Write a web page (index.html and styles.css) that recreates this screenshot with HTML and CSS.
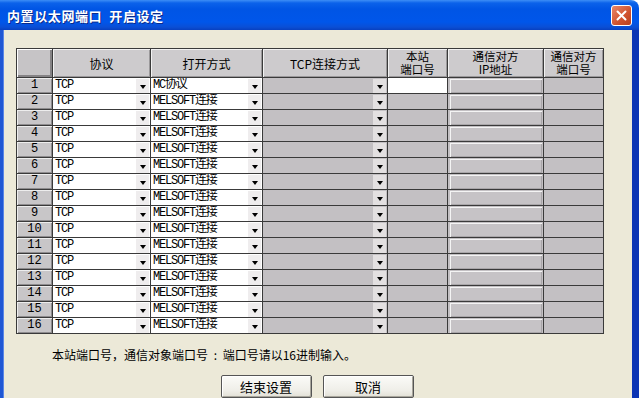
FILE: index.html
```html
<!DOCTYPE html>
<html lang="zh-CN">
<head>
  <meta charset="UTF-8">
  <title>内置以太网端口 开启设定</title>
  <link rel="stylesheet" href="styles.css">
</head>
<body>
  <div class="window">
    <!-- 标题栏 -->
    <div class="titlebar">
      <span class="title">内置以太网端口&nbsp;&nbsp;开启设定</span>
      <span class="close"><svg width="11" height="11" viewBox="0 0 11 11"><path d="M1.5 1.5 L9.5 9.5 M9.5 1.5 L1.5 9.5" stroke="#fff" stroke-width="2" stroke-linecap="round"/></svg></span>
    </div>

    <div class="client">
      <table class="ports">
        <colgroup>
          <col style="width:36px"><col style="width:98px"><col style="width:112px"><col style="width:125px"><col style="width:60px"><col style="width:96px"><col style="width:60px">
        </colgroup>
        <thead>
          <tr>
            <th class="corner"></th>
            <th>协议</th>
            <th>打开方式</th>
            <th>TCP连接方式</th>
            <th class="two"><span>本站</span><span>端口号</span></th>
            <th class="two"><span>通信对方</span><span>IP地址</span></th>
            <th class="two"><span>通信对方</span><span>端口号</span></th>
          </tr>
        </thead>
        <tbody>
          <tr><th class="num">1</th><td class="combo"><div><span>TCP</span><i></i></div></td><td class="combo"><div><span>MC协议</span><i></i></div></td><td class="combo off"><div><span></span><i></i></div></td><td class="port"></td><td class="ip"><div></div></td><td class="off"></td></tr>
          <tr><th class="num">2</th><td class="combo"><div><span>TCP</span><i></i></div></td><td class="combo"><div><span>MELSOFT连接</span><i></i></div></td><td class="combo off"><div><span></span><i></i></div></td><td class="off"></td><td class="ip"><div></div></td><td class="off"></td></tr>
          <tr><th class="num">3</th><td class="combo"><div><span>TCP</span><i></i></div></td><td class="combo"><div><span>MELSOFT连接</span><i></i></div></td><td class="combo off"><div><span></span><i></i></div></td><td class="off"></td><td class="ip"><div></div></td><td class="off"></td></tr>
          <tr><th class="num">4</th><td class="combo"><div><span>TCP</span><i></i></div></td><td class="combo"><div><span>MELSOFT连接</span><i></i></div></td><td class="combo off"><div><span></span><i></i></div></td><td class="off"></td><td class="ip"><div></div></td><td class="off"></td></tr>
          <tr><th class="num">5</th><td class="combo"><div><span>TCP</span><i></i></div></td><td class="combo"><div><span>MELSOFT连接</span><i></i></div></td><td class="combo off"><div><span></span><i></i></div></td><td class="off"></td><td class="ip"><div></div></td><td class="off"></td></tr>
          <tr><th class="num">6</th><td class="combo"><div><span>TCP</span><i></i></div></td><td class="combo"><div><span>MELSOFT连接</span><i></i></div></td><td class="combo off"><div><span></span><i></i></div></td><td class="off"></td><td class="ip"><div></div></td><td class="off"></td></tr>
          <tr><th class="num">7</th><td class="combo"><div><span>TCP</span><i></i></div></td><td class="combo"><div><span>MELSOFT连接</span><i></i></div></td><td class="combo off"><div><span></span><i></i></div></td><td class="off"></td><td class="ip"><div></div></td><td class="off"></td></tr>
          <tr><th class="num">8</th><td class="combo"><div><span>TCP</span><i></i></div></td><td class="combo"><div><span>MELSOFT连接</span><i></i></div></td><td class="combo off"><div><span></span><i></i></div></td><td class="off"></td><td class="ip"><div></div></td><td class="off"></td></tr>
          <tr><th class="num">9</th><td class="combo"><div><span>TCP</span><i></i></div></td><td class="combo"><div><span>MELSOFT连接</span><i></i></div></td><td class="combo off"><div><span></span><i></i></div></td><td class="off"></td><td class="ip"><div></div></td><td class="off"></td></tr>
          <tr><th class="num">10</th><td class="combo"><div><span>TCP</span><i></i></div></td><td class="combo"><div><span>MELSOFT连接</span><i></i></div></td><td class="combo off"><div><span></span><i></i></div></td><td class="off"></td><td class="ip"><div></div></td><td class="off"></td></tr>
          <tr><th class="num">11</th><td class="combo"><div><span>TCP</span><i></i></div></td><td class="combo"><div><span>MELSOFT连接</span><i></i></div></td><td class="combo off"><div><span></span><i></i></div></td><td class="off"></td><td class="ip"><div></div></td><td class="off"></td></tr>
          <tr><th class="num">12</th><td class="combo"><div><span>TCP</span><i></i></div></td><td class="combo"><div><span>MELSOFT连接</span><i></i></div></td><td class="combo off"><div><span></span><i></i></div></td><td class="off"></td><td class="ip"><div></div></td><td class="off"></td></tr>
          <tr><th class="num">13</th><td class="combo"><div><span>TCP</span><i></i></div></td><td class="combo"><div><span>MELSOFT连接</span><i></i></div></td><td class="combo off"><div><span></span><i></i></div></td><td class="off"></td><td class="ip"><div></div></td><td class="off"></td></tr>
          <tr><th class="num">14</th><td class="combo"><div><span>TCP</span><i></i></div></td><td class="combo"><div><span>MELSOFT连接</span><i></i></div></td><td class="combo off"><div><span></span><i></i></div></td><td class="off"></td><td class="ip"><div></div></td><td class="off"></td></tr>
          <tr><th class="num">15</th><td class="combo"><div><span>TCP</span><i></i></div></td><td class="combo"><div><span>MELSOFT连接</span><i></i></div></td><td class="combo off"><div><span></span><i></i></div></td><td class="off"></td><td class="ip"><div></div></td><td class="off"></td></tr>
          <tr><th class="num">16</th><td class="combo"><div><span>TCP</span><i></i></div></td><td class="combo"><div><span>MELSOFT连接</span><i></i></div></td><td class="combo off"><div><span></span><i></i></div></td><td class="off"></td><td class="ip"><div></div></td><td class="off"></td></tr>
        </tbody>
      </table>

      <p class="note">本站端口号，通信对象端口号 : 端口号请以16进制输入。</p>

      <div class="buttons">
        <button class="btn">结束设置</button>
        <button class="btn">取消</button>
      </div>
    </div>
  </div>
</body>
</html>
```

FILE: styles.css
```css
body {
  margin: 0;
  width: 639px;
  height: 398px;
  overflow: hidden;
  font: 12px "Noto Sans CJK SC", "Liberation Sans", sans-serif;
  color: #000;
}
.window {
  height: 398px;
  display: flex;
  flex-direction: column;
}
/* 标题栏 */
.titlebar {
  height: 30px;
  flex: none;
  display: flex;
  align-items: center;
  justify-content: space-between;
  padding: 0 7px 0 7px;
  border-top-right-radius: 8px;
  background: linear-gradient(#3d8ef6 0, #0b62ea 3px, #0055e5 9px, #0056ea 22px, #0a4fd6 27px, #0840c0 30px);
}
.title {
  color: #fff;
  font-weight: bold;
  font-size: 13px;
  letter-spacing: 0.6px;
  text-shadow: 1px 1px 0 #0a2a8a;
}
.close {
  width: 19px;
  height: 19px;
  margin-top: 1px;
  display: flex;
  align-items: center;
  justify-content: center;
  border: 1px solid #fff;
  border-radius: 3px;
  background: linear-gradient(135deg, #e9876a, #d0522e 60%, #b8401f);
}
/* 窗口主体 */
.client {
  flex: 1;
  background: #ece9d8;
  border-left: 3px solid #1f57d4;
  border-right: 7px solid #0b34b4;
  box-shadow: inset 1px 0 0 #5a86e6;
  padding: 18px 0 0 13px;
}
table.ports {
  border-collapse: collapse;
  table-layout: fixed;
  width: 587px;
  border: 1px solid #333;
}
table.ports th,
table.ports td {
  border: 1px solid #3a3a3a;
  padding: 0;
}
table.ports thead th {
  height: 28px;
  background: #cdcbcd;
  font-weight: normal;
  text-align: center;
  box-shadow: inset 1px 1px 0 #f2f2f2, inset -1px -1px 0 #9a989a;
}
table.ports thead th.two span {
  display: block;
  height: 13px;
  line-height: 13px;
  font-size: 11.5px;
}
table.ports thead th.corner {
  background: #c6c4c6;
  box-shadow: inset 1px 1px 0 #fff, inset -2px -2px 0 #858385;
}
table.ports tbody td,
table.ports tbody th {
  height: 15px;
}
table.ports th.num {
  background: #c8c6c8;
  font: 12px/15px "Liberation Mono", monospace;
  font-weight: normal;
  text-align: center;
  box-shadow: inset 1px 1px 0 #ededed, inset -1px -1px 0 #8e8c8e;
}
/* 下拉框单元格 */
td.combo {
  background: #fff;
}
td.combo > div {
  height: 15px;
  display: flex;
  align-items: center;
}
td.combo span {
  flex: 1;
  padding-left: 2px;
  font: 12px/15px "Liberation Mono", "Noto Sans CJK SC", monospace;
  letter-spacing: -1.2px;
  white-space: nowrap;
  overflow: hidden;
}
td.combo i {
  width: 13px;
  height: 14px;
  margin-right: 1px;
  display: flex;
  align-items: center;
  justify-content: center;
  background: #efedee;
}
td.combo i::after {
  content: "";
  margin-top: 2px;
  border-left: 3.5px solid transparent;
  border-right: 3.5px solid transparent;
  border-top: 4px solid #000;
}
td.off,
td.combo.off {
  background: #c3c0c3;
}
td.combo.off i {
  background: #e3e0e1;
}
td.port {
  background: #fff;
}
td.ip {
  background: #c3c0c3;
}
td.ip > div {
  height: 14px;
  margin: 1px 1px 0 2px;
  background: #c6c3c6;
  box-shadow: inset 1px 1px 0 #f4f4f4, inset -1px -1px 0 #a9a6a9;
}
/* 底部说明与按钮 */
.note {
  margin: 12px 0 0 36px;
  line-height: 18px;
  word-spacing: 3px;
}
.buttons {
  display: flex;
  justify-content: center;
  gap: 11px;
  margin-top: 11px;
  padding-right: 14px;
}
.btn {
  width: 91px;
  height: 23px;
  font: 13px "Noto Sans CJK SC", sans-serif;
  color: #000;
  background: linear-gradient(#fbfbf8, #efeee8 70%, #e2e0d6);
  border: 1px solid #555;
  border-radius: 2px;
  box-shadow: inset 1px 1px 0 #fff, inset -1px -1px 0 #a8a69c;
  padding: 0;
}
```
